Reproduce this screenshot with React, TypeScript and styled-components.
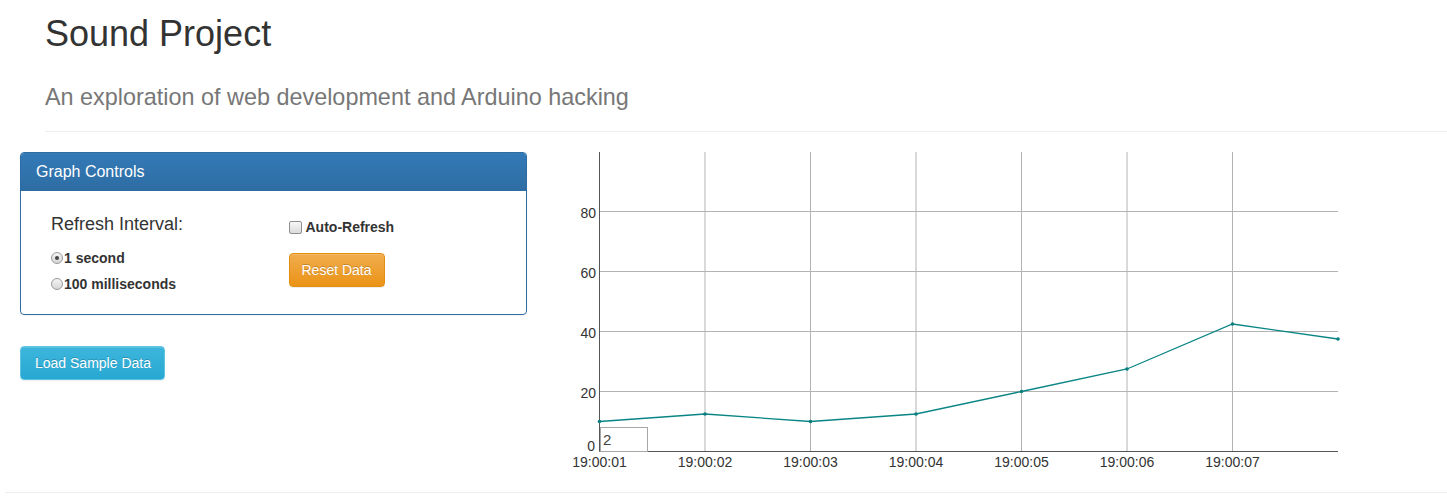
import React from 'react';
import styled, { createGlobalStyle } from 'styled-components';

const GlobalStyle = createGlobalStyle`
  html, body {
    margin: 0;
    padding: 0;
    background: #fff;
    font-family: "Liberation Sans", Arial, sans-serif;
    font-size: 14px;
    color: #333;
  }
`;

const PageHeader = styled.header`
  margin-left: 45px;
  padding-top: 14px;
  padding-bottom: 21px;
  border-bottom: 1px solid #eee;
`;

const Title = styled.h1`
  margin: 0;
  font-size: 36px;
  font-weight: 400;
  line-height: 1.1;
  color: #333;
`;

const Subtitle = styled.h3`
  margin: 30px 0 0;
  font-size: 23.4px;
  font-weight: 400;
  line-height: 26px;
  color: #777;
`;

const Row = styled.div`
  display: grid;
  grid-template-columns: 507px 1fr;
  column-gap: 33px;
  margin-top: 20px;
  padding-left: 20px;
`;

const Sidebar = styled.div`
  display: flex;
  flex-direction: column;
  align-items: flex-start;
`;

const Panel = styled.section`
  width: 100%;
  box-sizing: border-box;
  border: 1px solid #2e6da4;
  border-radius: 4px;
  overflow: hidden;
  box-shadow: 0 1px 2px rgba(0, 0, 0, 0.05);
`;

const PanelHeading = styled.div`
  padding: 10px 15px;
  font-size: 16px;
  line-height: 1.1;
  color: #fff;
  background: linear-gradient(to bottom, #337ab7 0%, #2e6da4 100%);
  border-bottom: 1px solid #2e6da4;
`;

const PanelBody = styled.div`
  display: grid;
  grid-template-columns: 1fr 1fr;
  padding: 0 15px 17px;
`;

const Col = styled.div`
  padding: 0 15px;
  display: flex;
  flex-direction: column;
  align-items: flex-start;
`;

const GroupTitle = styled.h4`
  margin: 24px 0 10px;
  font-size: 18px;
  font-weight: 400;
  line-height: 1.1;
`;

const OptionRow = styled.label<{ $height: number; $top?: number }>`
  display: flex;
  align-items: center;
  height: ${p => p.$height}px;
  margin-top: ${p => p.$top ?? 0}px;
  font-size: 14px;
  font-weight: 700;
  color: #333;
`;

const RadioInput = styled.input`
  appearance: none;
  box-sizing: border-box;
  width: 12px;
  height: 12px;
  margin: 0 1px 0 0;
  border: 1px solid #9a9a9a;
  border-radius: 50%;
  background: linear-gradient(to bottom, #f4f4f4, #d6d6d6);
  display: grid;
  place-items: center;

  &:checked::after {
    content: '';
    width: 4px;
    height: 4px;
    border-radius: 50%;
    background: #444;
  }
`;

const CheckInput = styled.input`
  appearance: none;
  box-sizing: border-box;
  width: 13px;
  height: 13px;
  margin: 0 4px 0 0;
  border: 1px solid #8f8f8f;
  border-radius: 2px;
  background: linear-gradient(to bottom, #f6f6f6, #dcdcdc);
`;

const Button = styled.button<{ $tone: 'warning' | 'info' }>`
  box-sizing: border-box;
  height: 34px;
  padding: 6px 12px;
  font-family: inherit;
  font-size: 14px;
  line-height: 20px;
  color: #fff;
  border-radius: 4px;
  text-shadow: 0 -1px 0 rgba(0, 0, 0, 0.2);
  box-shadow: inset 0 1px 0 rgba(255, 255, 255, 0.15), 0 1px 1px rgba(0, 0, 0, 0.075);
  cursor: pointer;
  border: 1px solid ${p => (p.$tone === 'warning' ? '#e38d13' : '#5fc3e4')};
  background: ${p =>
    p.$tone === 'warning'
      ? 'linear-gradient(to bottom, #f0ad4e 0%, #eb9316 100%)'
      : 'linear-gradient(to bottom, #3db6dc 0%, #27a8d3 100%)'};
`;

const ResetButton = styled(Button)`
  margin-top: 14px;
`;

const LoadButton = styled(Button)`
  margin-top: 31px;
  padding: 6px 13px 6px 14px;
`;

const ChartBox = styled.div`
  height: 330px;
`;

const Footer = styled.div`
  margin: 10px 0 0 5px;
  border-top: 1px solid #eee;
  height: 8px;
`;

const labels = ['19:00:01', '19:00:02', '19:00:03', '19:00:04', '19:00:05', '19:00:06', '19:00:07'];
const values = [10, 12.5, 10, 12.5, 20, 27.5, 42.5, 37.5];

const X0 = 39.5;
const STEP = 105.5;
const Y0 = 299.5;
const RIGHT = 778;
const yOf = (v: number) => Y0 - v * 3;

function Chart() {
  const points = values.map((v, i) => `${X0 + i * STEP},${yOf(v)}`).join(' ');
  return (
    <svg width="887" height="330" viewBox="0 0 887 330" fontFamily='"Liberation Sans", Arial, sans-serif'>
      {[1, 2, 3, 4, 5, 6].map(i => (
        <line key={`v${i}`} x1={X0 + i * STEP} x2={X0 + i * STEP} y1={0} y2={Y0} stroke="#b3b3b3" strokeWidth="1" />
      ))}
      {[20, 40, 60, 80].map(v => (
        <line key={`h${v}`} x1={X0} x2={RIGHT} y1={yOf(v)} y2={yOf(v)} stroke="#b3b3b3" strokeWidth="1" />
      ))}
      <line x1={X0} x2={X0} y1={0} y2={Y0} stroke="#555" strokeWidth="1" />
      <line x1={X0} x2={RIGHT} y1={Y0} y2={Y0} stroke="#555" strokeWidth="1" />
      {[20, 40, 60, 80].map(v => (
        <text key={`yl${v}`} x={36} y={yOf(v) + 6.5} fontSize="14" fill="#333" textAnchor="end">
          {v}
        </text>
      ))}
      <text x={35} y={299} fontSize="14" fill="#333" textAnchor="end">0</text>
      {labels.map((l, i) => (
        <text key={l} x={X0 + i * STEP} y={315} fontSize="14" fill="#333" textAnchor="middle">
          {l}
        </text>
      ))}
      <polyline points={points} fill="none" stroke="#0a8585" strokeWidth="1.3" />
      {values.map((v, i) => (
        <circle key={i} cx={X0 + i * STEP} cy={yOf(v)} r="1.8" fill="#0a7f7f" />
      ))}
      <rect x={40.5} y={275.5} width={47} height={24} fill="#fff" stroke="#a6a6a6" strokeWidth="1" />
      <text x={43} y={293} fontSize="15" fill="#444">2</text>
    </svg>
  );
}

export default function App() {
  return (
    <>
      <GlobalStyle />
      <PageHeader>
        <Title>Sound Project</Title>
        <Subtitle>An exploration of web development and Arduino hacking</Subtitle>
      </PageHeader>
      <Row>
        <Sidebar>
          <Panel>
            <PanelHeading>Graph Controls</PanelHeading>
            <PanelBody>
              <Col>
                <GroupTitle>Refresh Interval:</GroupTitle>
                <OptionRow $height={26}>
                  <RadioInput type="radio" name="interval" defaultChecked />1 second
                </OptionRow>
                <OptionRow $height={26}>
                  <RadioInput type="radio" name="interval" />100 milliseconds
                </OptionRow>
              </Col>
              <Col>
                <OptionRow $height={24} $top={24}>
                  <CheckInput type="checkbox" />Auto-Refresh
                </OptionRow>
                <ResetButton $tone="warning">Reset Data</ResetButton>
              </Col>
            </PanelBody>
          </Panel>
          <LoadButton $tone="info">Load Sample Data</LoadButton>
        </Sidebar>
        <ChartBox>
          <Chart />
        </ChartBox>
      </Row>
      <Footer />
    </>
  );
}
